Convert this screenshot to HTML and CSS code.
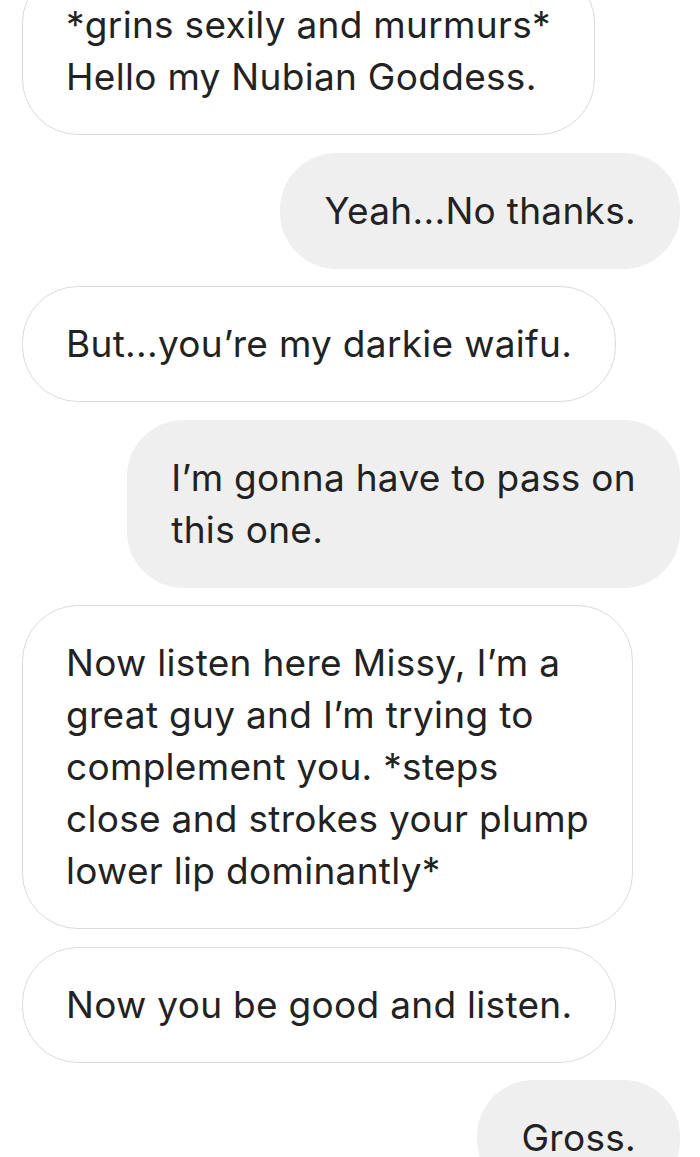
FILE: index.html
```html
<!DOCTYPE html>
<html>
<head>
<meta charset="utf-8">
<link rel="stylesheet" href="styles.css">
</head>
<body>
<div class="thread">
  <div class="msg in">*grins sexily and murmurs*<br>Hello my Nubian Goddess.</div>
  <div class="msg out">Yeah...No thanks.</div>
  <div class="msg in">But...you’re my darkie waifu.</div>
  <div class="msg out">I’m gonna have to pass on<br>this one.</div>
  <div class="msg in">Now listen here Missy, I’m a<br>great guy and I’m trying to<br>complement you. *steps<br>close and strokes your plump<br>lower lip dominantly*</div>
  <div class="msg in">Now you be good and listen.</div>
  <div class="msg out">Gross.</div>
</div>
</body>
</html>
```

FILE: styles.css
```css
html, body {
  margin: 0;
  padding: 0;
  background: #ffffff;
  overflow: hidden;
}

.thread {
  display: flex;
  flex-direction: column;
  gap: 17.5px;
  margin-top: -33px;
  padding: 0 20px 0 22px;
  font-family: "Inter", "Liberation Sans", sans-serif;
  font-size: 37px;
  line-height: 52px;
  letter-spacing: 0.3px;
  color: #222222;
}

.msg {
  padding: 31px 43px;
  border-radius: 56px;
  white-space: nowrap;
  border: 1px solid transparent;
}

.in {
  align-self: flex-start;
  background: #ffffff;
  border-color: #dbdbdb;
}

.out {
  align-self: flex-end;
  background: #efefef;
  border-color: #efefef;
}
```
